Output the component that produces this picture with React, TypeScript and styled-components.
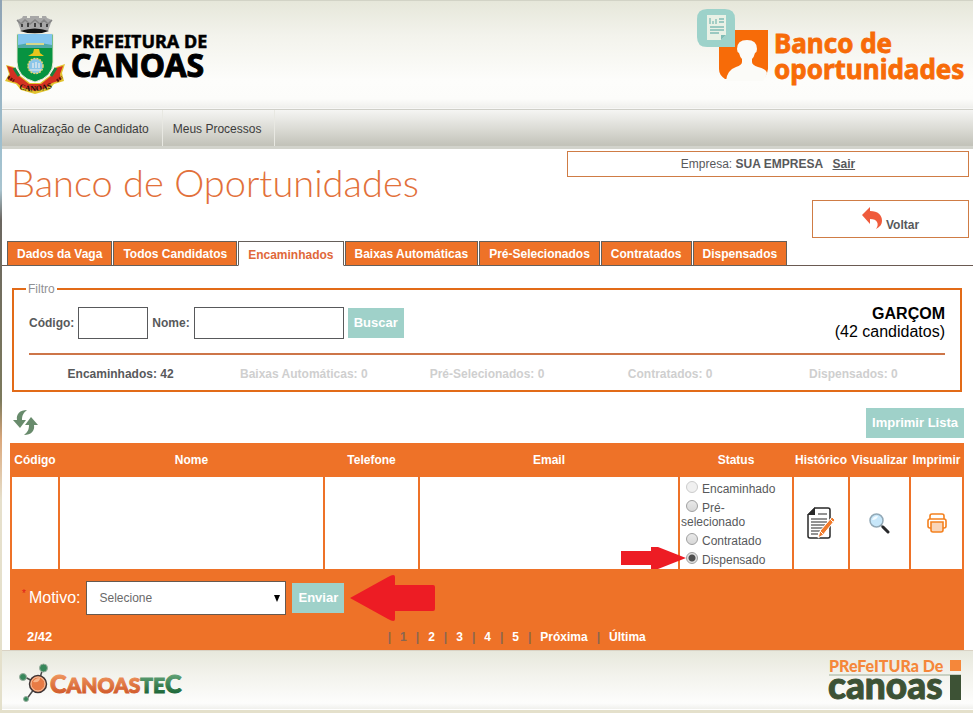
import React, { useState } from "react";
import styled, { createGlobalStyle } from "styled-components";

const orange = "#ee7228";
const mint = "#9fd1c9";
const ink = "#58595b";

const GlobalStyle = createGlobalStyle`
  * { box-sizing: border-box; }
  body {
    margin: 0;
    background: #e4e0cb;
    color: ${ink};
    font: 12px/14px "Liberation Sans", Arial, sans-serif;
  }
`;

const Page = styled.div`
  padding: 0 0 3px 2px;
  background: linear-gradient(180deg, #8fa3b4 0, #9fc0cf 150px, #a9c4cf 190px, #6b6660 220px, #7c7a5c 400px, #dba87c 440px, #e6e0cc 500px, #e4e0cb 100%);
`;

const Header = styled.header`
  display: flex;
  justify-content: space-between;
  height: 110px;
  border-top: 1px solid #d2d3c6;
  border-bottom: 1px solid #cfcfc8;
  background: linear-gradient(180deg, #e6e7da 0, #f3f3ec 35px, #fdfdfb 80px, #fcfcfa 98px, #efefec 107px, #ffffff 108px);
  svg { display: block; }
`;

const Nav = styled.nav`
  display: flex;
  height: 39px;
  border-bottom: 3px solid #d2d3cc;
  background: linear-gradient(180deg, #f5f5f3 0, #dcdcd6 18px, #c3c3ba 35px);
`;

const NavLink = styled.a`
  padding: 12px 13px 0 10px;
  border-right: 1px solid #e8e8e2;
  color: #3c3c3c;
  text-decoration: none;
`;

const Main = styled.main`
  display: flow-root;
  background: #ffffff;
`;

const Top = styled.div`
  display: flex;
  justify-content: space-between;
  height: 92px;
  padding: 2px 4px 0 9px;
`;

const Title = styled.h1`
  margin: 11px 0 0;
  color: #e2703a;
  font: 300 38px/40px Lato, sans-serif;
  white-space: nowrap;
`;

const Account = styled.div`
  display: flex;
  flex-direction: column;
  align-items: flex-end;
  gap: 23px;
  width: 402px;
`;

const Company = styled.div`
  width: 100%;
  height: 26px;
  padding-top: 5px;
  border: 1px solid #cf7c45;
  text-align: center;
  a { margin-left: 6px; color: inherit; font-weight: bold; }
`;

const BackButton = styled.button`
  display: flex;
  align-items: flex-start;
  justify-content: center;
  gap: 4px;
  width: 157px;
  height: 38px;
  padding: 6px 0 0;
  border: 1px solid #cf7c45;
  background: #ffffff;
  color: ${ink};
  font: bold 12px/14px "Liberation Sans", Arial, sans-serif;
  span { margin-top: 11px; }
`;

const Tabs = styled.div`
  display: flex;
  gap: 1px;
  padding-left: 5px;
  border-bottom: 1px solid #6a5a52;
`;

const Tab = styled.button<{ $active: boolean }>`
  height: 25px;
  margin-bottom: -1px;
  padding: ${(p) => (p.$active ? "2px" : "0")} 9px 0;
  border: 1px solid #655f5a;
  border-bottom-color: ${(p) => (p.$active ? "#ffffff" : "#655f5a")};
  background: ${(p) => (p.$active ? "#ffffff" : orange)};
  color: ${(p) => (p.$active ? "#e0683a" : "#ffffff")};
  font: bold 12px/14px "Liberation Sans", Arial, sans-serif;
  white-space: nowrap;
`;

const Filter = styled.fieldset`
  margin: 16px 11px 0 10px;
  padding: 0 15px 9px;
  border: 2px solid #e26b18;
  legend {
    margin-left: -3px;
    padding: 0 2px;
    color: #8f9094;
  }
`;

const FilterRow = styled.div`
  display: flex;
  align-items: center;
  gap: 4px;
  padding: 7px 0 10px;
  height: 59px;
  border-bottom: 2px solid #cd7548;
  label { font-weight: bold; }
`;

const TextInput = styled.input<{ $width: number }>`
  width: ${(p) => p.$width}px;
  height: 32px;
  border: 1px solid #58595b;
  background: #ffffff;
`;

const ActionButton = styled.button`
  height: 30px;
  padding: 0 6px;
  border: 0;
  background: ${mint};
  color: #ffffff;
  font: bold 13px/16px "Liberation Sans", Arial, sans-serif;
  white-space: nowrap;
`;

const Vacancy = styled.div`
  margin-left: auto;
  color: #000000;
  font-size: 16px;
  line-height: 18px;
  text-align: right;
  strong { display: block; }
`;

const Stats = styled.div`
  display: grid;
  grid-template-columns: repeat(5, 1fr);
  padding-top: 12px;
  font-weight: bold;
  text-align: center;
`;

const Stat = styled.span<{ $muted: boolean }>`
  color: ${(p) => (p.$muted ? "#cfcfcf" : ink)};
`;

const ListBar = styled.div`
  display: flex;
  align-items: center;
  justify-content: space-between;
  margin: 16px 9px 5px 11px;
`;

const IconButton = styled.button`
  display: inline-flex;
  padding: 0;
  border: 0;
  background: none;
  vertical-align: middle;
`;

const Results = styled.section`
  margin: 0 9px 0 8px;
  background: ${orange};
`;

const Table = styled.table`
  width: 100%;
  border-spacing: 2px;
  table-layout: fixed;
  th {
    height: 30px;
    padding: 0;
    color: #ffffff;
    white-space: nowrap;
  }
  td {
    height: 92px;
    padding: 0;
    background: #ffffff;
    text-align: center;
  }
`;

const StatusList = styled.div`
  position: relative;
  display: flex;
  flex-direction: column;
  gap: 4px;
  padding: 4px 10px 0 1px;
  height: 92px;
  text-align: left;
`;

const StatusOption = styled.label`
  display: block;
`;

const Radio = styled.input`
  appearance: none;
  width: 12px;
  height: 12px;
  margin: 0 4px 0 5px;
  border: 1px solid #a0a0a0;
  border-radius: 50%;
  background: linear-gradient(180deg, #e9e9e9, #d8d8d8);
  vertical-align: 0;
  &:disabled { border-color: #cccccc; background: #f0f0f0; }
  &:checked { background: radial-gradient(circle, #505050 0 3px, #e0e0e0 4px); }
`;

const SmallArrow = styled.svg`
  position: absolute;
  right: 106px;
  bottom: 0;
`;

const ReasonRow = styled.div`
  display: flex;
  align-items: center;
  gap: 6px;
  padding: 4px 0 0 12px;
  label { color: #ffffff; font-size: 16px; line-height: 18px; }
  sup { margin-right: 3px; color: #e01b1b; font-size: 10px; line-height: 10px; }
`;

const SelectBox = styled.div`
  display: grid;
  align-items: center;
  width: 200px;
  svg { grid-area: 1 / 1; justify-self: end; margin-right: 5px; pointer-events: none; }
`;

const Select = styled.select`
  grid-area: 1 / 1;
  appearance: none;
  width: 100%;
  height: 34px;
  padding: 0 12px;
  border: 1px solid #66594f;
  border-radius: 0;
  background: #ffffff;
  color: #6a6a6a;
  font: 12px/16px "Liberation Sans", Arial, sans-serif;
`;

const Pager = styled.div`
  display: grid;
  grid-template-columns: 38.5% auto;
  align-items: center;
  padding: 9px 0 6px 17px;
  color: #ffffff;
  font-weight: bold;
  strong { font-size: 13px; }
`;

const Pages = styled.div`
  display: flex;
`;

const PageLink = styled.a<{ $current?: boolean }>`
  display: flex;
  gap: 9px;
  padding-right: 9px;
  color: ${(p) => (p.$current ? "#8a6650" : "#ffffff")};
  text-decoration: none;
  &::before { content: "|"; color: #8a6650; }
`;

const Footer = styled.footer`
  display: flex;
  justify-content: space-between;
  height: 60px;
  border-top: 1px solid #d9d2c4;
  border-bottom: 1px solid #ffffff;
  background: linear-gradient(180deg, #e7e8dc, #f3f3ed 25px, #fdfdfc 52px, #eeeeea 59px);
  svg { display: block; }
`;

const CityLogo = () => (
  <svg width="220" height="108" viewBox="2 1 220 108" role="img" aria-label="Prefeitura de Canoas">
    <path d="M17 20l5-2 1-2h4v2h3v-2h9v2h3v-2h4l1 2 5 2-4 11q-13-4-27 0z" fill="#a7a7a7" />
    <path d="M17 20l4 4 4-4 5 4 5-4 5 4 4-4 4 4 4-4" fill="none" stroke="#858585" strokeWidth="1.500" />
    <path d="M22 24v3m6-4v4m7-4v4m6-4v4m6-3v3" stroke="#222" strokeWidth="1.500" />
    <path d="M20 31q15-5 29 0-14 5-29 0z" fill="#111" />
    <path d="M6 65l8 2 4 7 12 9 10 0 12-9 4-7 9-3-3 9 2 8-10 3-5 6-14 4-14-4-5-6-11-3 4-7z" fill="#e2c42e" />
    <path d="M7 66l7 2 5 8 10 8h12l10-8 5-8 7-2-3 8 1 6-9 3-6 5-11 3-12-3-6-5-9-3 2-6z" fill="#d33122" />
    <path d="M14 68l5 8m37-8l-5 8" stroke="#17823c" strokeWidth="3" />
    <path d="M17 34h36v28q0 15-18 20-18-5-18-20z" fill="#079341" stroke="#e9ead4" />
    <path d="M18 34h34v14H18z" fill="#83c5ef" />
    <path d="M18 45q17-4 34 0v3H18z" fill="#4fa9a8" />
    <path d="M26 43h18v2H26z" fill="#d7d88b" />
    <path d="M28 56l5-3 1-4h5l1 4 4 3z" fill="#e7c51c" />
    <circle cx="35.500" cy="66" r="7.500" fill="#8bc6e9" stroke="#e7d46f" strokeWidth="1.500" strokeDasharray="2 1" />
    <path d="M30 70h11M33 63v5m3-6v6m3-5v5" stroke="#eee" strokeWidth="1.200" />
    <path id="ribbonCurve" d="M19 89q16 5 33-1" fill="none" />
    <text fontFamily="Liberation Serif, serif" fontSize="8" fontWeight="700" fill="#17110e"><textPath href="#ribbonCurve">CANOAS</textPath></text>
    <path d="M8 77l6 4m43 0l5-4" stroke="#5b1710" strokeWidth="3" strokeDasharray="2 1" />
    <g fill="#000" stroke="#000" strokeWidth="0.500" fontFamily="Noto Sans, sans-serif" fontWeight="700">
      <text x="71" y="48" fontSize="18">PREFEITURA DE</text>
      <text x="71" y="77" fontSize="32" strokeWidth="1">CANOAS</text>
    </g>
  </svg>
);

const BankLogo = () => (
  <svg width="286" height="108" viewBox="687 1 286 108" role="img" aria-label="Banco de oportunidades">
    <path d="M719 30h49v39q-1 6-5 10h-38q-6-4-6-10z" fill="#f76b08" />
    <path d="M726 81q1-11 10-14 6-2 6-5v-3q-2-2-3-6-2-1-2-4 0-9 10-9t10 9q0 3-2 4-1 4-3 6v3q0 3 6 5 8 2 9 6-1 4-4 8z" fill="#fbfbf8" />
    <path d="M707 9h18q10 0 10 10v28h-28q-10 0-10-10V19q0-10 10-10z" fill="#9dd2ca" />
    <path d="M707 15h19v20l-5 5h-14z" fill="#e9f1e6" />
    <path d="M721 40v-5h5z" fill="#80bcb5" />
    <path d="M710 18v6m3-3v3m3-5v5m3-5h5m-5 3h5m-14 5h14m-14 3h14m-14 3h9" stroke="#80bcb5" strokeWidth="1.300" />
    <g fill="#f76b08" stroke="#f76b08" strokeWidth="0.800" fontFamily="Noto Sans, sans-serif" fontWeight="700" fontSize="26">
      <text x="774" y="53">Banco de</text>
      <text x="774" y="79">oportunidades</text>
    </g>
  </svg>
);

const TecLogo = () => (
  <svg width="190" height="58" viewBox="2 651 190 58" role="img" aria-label="CanoasTec">
    <defs>
      <linearGradient id="tecOrange" gradientUnits="userSpaceOnUse" x1="0" y1="673" x2="0" y2="695"><stop stopColor="#f19a62" /><stop offset="1" stopColor="#cf5627" /></linearGradient>
      <linearGradient id="tecGreen" gradientUnits="userSpaceOnUse" x1="0" y1="673" x2="0" y2="695"><stop stopColor="#67a77b" /><stop offset="1" stopColor="#176233" /></linearGradient>
    </defs>
    <path d="M38 684l5-16M38 684l-15-8M37 685l-11 15" stroke="#4b4b4b" strokeWidth="1.500" />
    <g stroke="#9aaf9f"><circle cx="43.500" cy="668" r="4" fill="#37875a" /><circle cx="23" cy="677" r="3.500" fill="#37875a" /><circle cx="26" cy="699" r="2.500" fill="#37875a" /></g>
    <circle cx="38" cy="684" r="8.500" fill="#e87b45" stroke="#3e3536" strokeWidth="1.500" />
    <circle cx="38" cy="684" r="7" fill="none" stroke="#f5c6a6" />
    <path d="M33 682q2-4 7-4 0 5-7 4z" fill="#f7b68c" />
    <text x="50" y="693" fontFamily="Lato, sans-serif" fontWeight="900" fontSize="21" strokeWidth="1">
      <tspan fill="url(#tecOrange)" stroke="url(#tecOrange)" fontSize="25">C</tspan>
      <tspan fill="url(#tecOrange)" stroke="url(#tecOrange)">ANOAS</tspan>
      <tspan fill="url(#tecGreen)" stroke="url(#tecGreen)">TE</tspan>
      <tspan fill="url(#tecGreen)" stroke="url(#tecGreen)" fontSize="25">C</tspan>
    </text>
  </svg>
);

const FooterCityLogo = () => (
  <svg width="150" height="58" viewBox="823 651 150 58" role="img" aria-label="Prefeitura de Canoas">
    <g fontFamily="Lato, sans-serif" fontWeight="900">
      <text x="829" y="672" fontSize="16" fill="#f5873a">PReFeITURa De</text>
      <text x="828" y="699" fontSize="37" fill="#3d5235" stroke="#3d5235">canoas</text>
    </g>
    <path d="M829 675h132" stroke="#9fae98" />
    <path d="M950 660h11v11h-11z" fill="#f5873a" />
    <path d="M950 675h11v25h-11z" fill="#3d5235" />
  </svg>
);

const BackIcon = () => (
  <svg width="20" height="23" viewBox="0 0 20 23" aria-hidden="true">
    <path d="M0 8L8 0v4c8 0 12 4 12 10 0 3-2 6-6 8 2-3 2-5 1-7-1-2-3-3-7-3v5z" fill="#ef5b3c" />
  </svg>
);

const RefreshIcon = () => (
  <svg width="26" height="26" viewBox="0 0 26 26" fill="#688b6c" aria-hidden="true">
    <path d="M14 0C7 0 3 4 4 10H0l7 8 6-8H9C9 6 10 3 14 0z" />
    <path d="M14 0C7 0 3 4 4 10H0l7 8 6-8H9C9 6 10 3 14 0z" transform="rotate(180 12.500 12.500)" />
  </svg>
);

const HistoryIcon = () => (
  <svg width="28" height="32" viewBox="0 0 28 32" fill="none" aria-hidden="true">
    <path d="M8 1h13q2 0 2 2v26q0 2-2 2H3q-2 0-2-2V8z" stroke="#292929" strokeWidth="1.500" />
    <path d="M0 8l8-8v8z" fill="#292929" />
    <path d="M11 7h9M4 12h16M4 15h16M4 18h14M4 21h12M4 24h9M4 27h7" stroke="#292929" strokeWidth="1.200" />
    <path d="M11 31l2-7L25 10l3 3-12 15z" fill="#f07b2c" stroke="#fff" />
    <path d="M13 24l3 3M23 12l3 3" stroke="#fff" strokeWidth="1" />
  </svg>
);

const SearchIcon = () => (
  <svg width="21" height="21" viewBox="0 0 21 21" aria-hidden="true">
    <circle cx="7.500" cy="7.500" r="6.500" fill="#c7e7fa" stroke="#92a9b7" strokeWidth="1.500" />
    <path d="M3 7q1-4 6-4-1 4-6 4z" fill="#f3fbff" />
    <path d="M12 12l2 2" stroke="#88959c" strokeWidth="2" />
    <path d="M14 14l5 5" stroke="#28292b" strokeWidth="3" strokeLinecap="round" />
  </svg>
);

const PrintIcon = () => (
  <svg width="20" height="20" viewBox="0 0 20 20" fill="none" stroke="#f4811f" strokeWidth="1.600" aria-hidden="true">
    <path d="M3 6V3q0-2 2-2h10q2 0 2 2v3" />
    <path d="M4 15H3q-2 0-2-2V8q0-2 2-2h14q2 0 2 2v5q0 2-2 2h-1" />
    <path d="M4 9h12v8q0 2-2 2H6q-2 0-2-2z" fill="#f9d5b9" />
  </svg>
);

const tabs = ["Dados da Vaga", "Todos Candidatos", "Encaminhados", "Baixas Automáticas", "Pré-Selecionados", "Contratados", "Dispensados"];
const stats = ["Encaminhados: 42", "Baixas Automáticas: 0", "Pré-Selecionados: 0", "Contratados: 0", "Dispensados: 0"];
const columns: [string, number | undefined][] = [["Código", 46], ["Nome", 263], ["Telefone", 93], ["Email", undefined], ["Status", 112], ["Histórico", 54], ["Visualizar", 59], ["Imprimir", 51]];
const statuses = ["Encaminhado", "Pré-selecionado", "Contratado", "Dispensado"];
const pages = ["1", "2", "3", "4", "5", "Próxima", "Última"];

const Col = styled.col<{ $width?: number }>`
  width: ${(p) => (p.$width ? `${p.$width}px` : "auto")};
`;

export default function App() {
  const [tab, setTab] = useState("Encaminhados");
  const [status, setStatus] = useState("Dispensado");
  return (
    <Page>
      <GlobalStyle />
      <Header><CityLogo /><BankLogo /></Header>
      <Nav>
        <NavLink href="#candidato">Atualização de Candidato</NavLink>
        <NavLink href="#processos">Meus Processos</NavLink>
      </Nav>
      <Main>
        <Top>
          <Title>Banco de Oportunidades</Title>
          <Account>
            <Company>Empresa: <strong>SUA EMPRESA</strong> <a href="#sair">Sair</a></Company>
            <BackButton type="button"><BackIcon /><span>Voltar</span></BackButton>
          </Account>
        </Top>
        <Tabs role="tablist">
          {tabs.map((name) => (
            <Tab key={name} type="button" role="tab" aria-selected={tab === name} $active={tab === name} onClick={() => setTab(name)}>{name}</Tab>
          ))}
        </Tabs>
        <Filter>
          <legend>Filtro</legend>
          <FilterRow>
            <label htmlFor="codigo">Código:</label>
            <TextInput id="codigo" $width={70} />
            <label htmlFor="nome">Nome:</label>
            <TextInput id="nome" $width={150} />
            <ActionButton type="button">Buscar</ActionButton>
            <Vacancy><strong>GARÇOM</strong>(42 candidatos)</Vacancy>
          </FilterRow>
          <Stats>{stats.map((s, i) => <Stat key={s} $muted={i > 0}>{s}</Stat>)}</Stats>
        </Filter>
        <ListBar>
          <IconButton type="button" aria-label="Atualizar"><RefreshIcon /></IconButton>
          <ActionButton type="button">Imprimir Lista</ActionButton>
        </ListBar>
        <Results>
          <Table>
            <colgroup>{columns.map(([name, width]) => <Col key={name} $width={width} />)}</colgroup>
            <thead><tr>{columns.map(([name]) => <th key={name} scope="col">{name}</th>)}</tr></thead>
            <tbody>
              <tr>
                <td /><td /><td /><td />
                <td>
                  <StatusList>
                    {statuses.map((name, i) => (
                      <StatusOption key={name}>
                        <Radio type="radio" name="status" disabled={i === 0} checked={status === name} onChange={() => setStatus(name)} />
                        {name}
                      </StatusOption>
                    ))}
                    <SmallArrow width="65" height="22" viewBox="0 0 65 22" aria-hidden="true">
                      <path d="M0 4h30V0h7l28 11-28 11h-7v-4H0z" fill="#ed1c24" />
                    </SmallArrow>
                  </StatusList>
                </td>
                <td><IconButton type="button" aria-label="Histórico"><HistoryIcon /></IconButton></td>
                <td><IconButton type="button" aria-label="Visualizar"><SearchIcon /></IconButton></td>
                <td><IconButton type="button" aria-label="Imprimir"><PrintIcon /></IconButton></td>
              </tr>
            </tbody>
          </Table>
          <ReasonRow>
            <label htmlFor="motivo"><sup>*</sup>Motivo:</label>
            <SelectBox>
              <Select id="motivo"><option>Selecione</option></Select>
              <svg width="8" height="7" viewBox="0 0 8 7" aria-hidden="true"><path d="M1 0h6L4 7z" /></svg>
            </SelectBox>
            <ActionButton type="button">Enviar</ActionButton>
            <svg width="86" height="46" viewBox="0 0 86 46" aria-hidden="true">
              <path d="M0 23L38 2q7-4 7 0v8h38q2 0 2 2v22q0 2-2 2H45v8q0 4-7 0z" fill="#ed1c24" />
            </svg>
          </ReasonRow>
          <Pager>
            <strong>2/42</strong>
            <Pages>{pages.map((p) => <PageLink key={p} href={`#${p}`} $current={p === "1"}>{p}</PageLink>)}</Pages>
          </Pager>
        </Results>
      </Main>
      <Footer><TecLogo /><FooterCityLogo /></Footer>
    </Page>
  );
}
